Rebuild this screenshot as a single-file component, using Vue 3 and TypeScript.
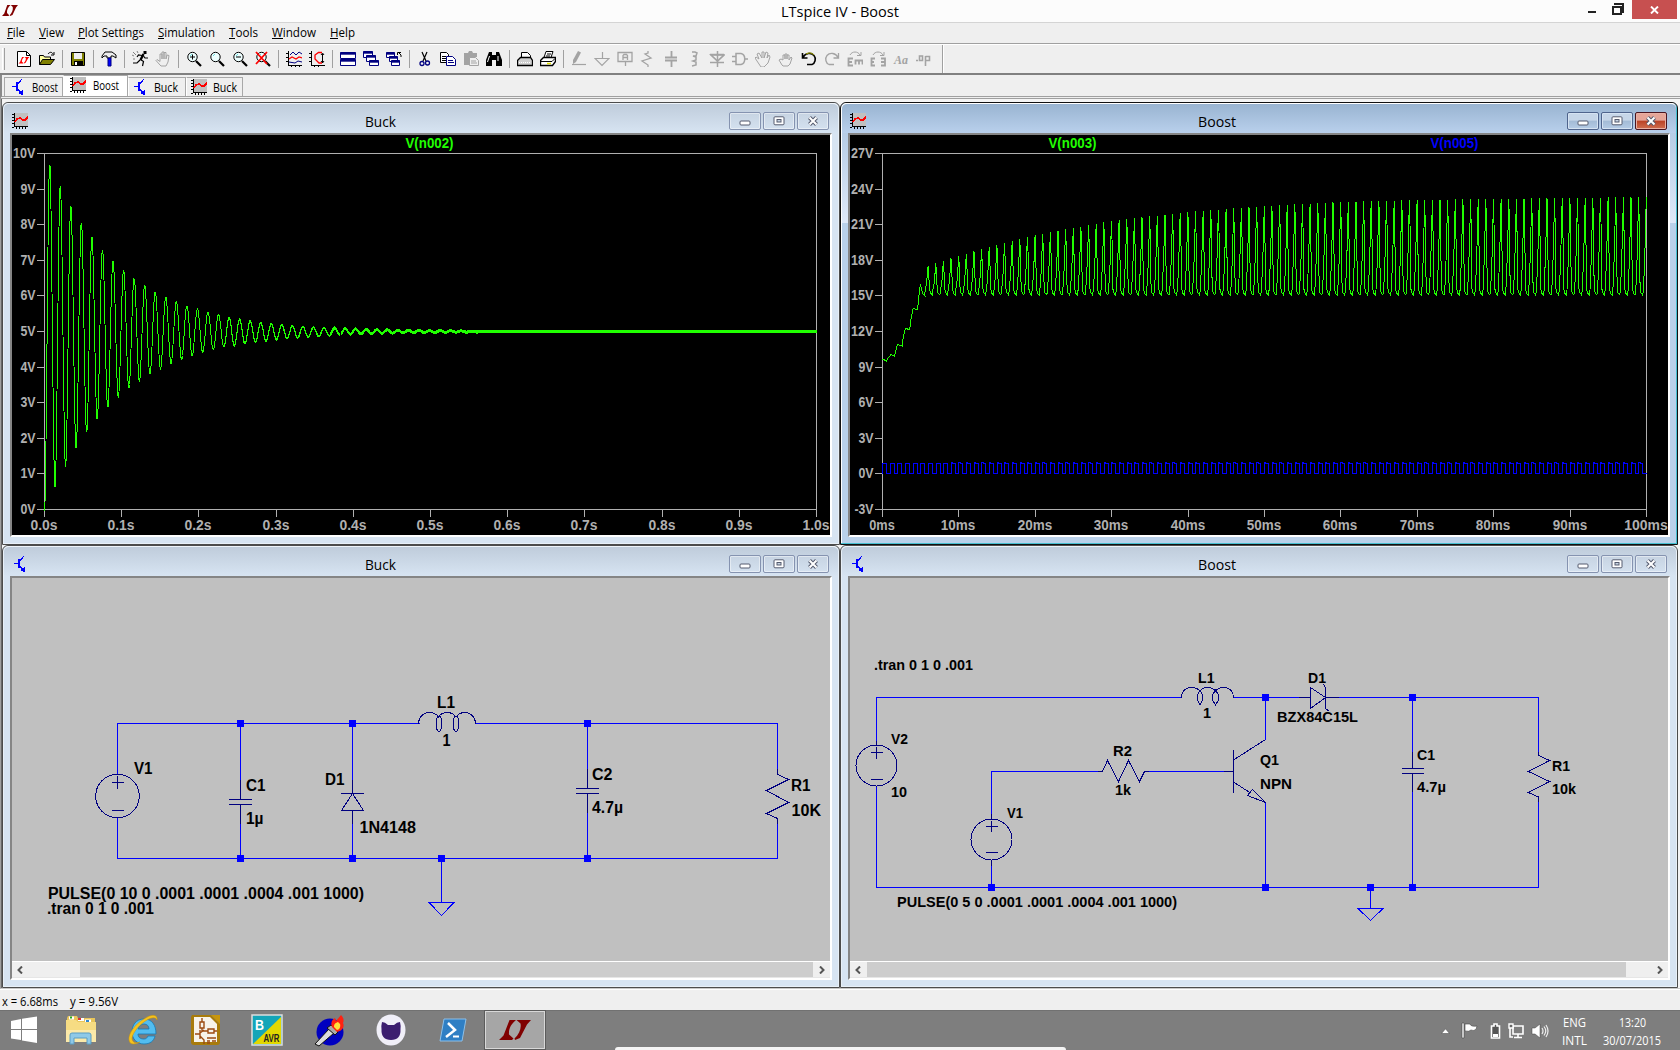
<script setup lang="ts">
import { h, type FunctionalComponent } from 'vue'

interface FitProps { t: string; w: number; s?: number; fill?: string; font?: string; ul?: number }

// One line of text set to an exact width; ul is the width of the mnemonic underline.
const Fit: FunctionalComponent<FitProps> = (p) => {
  const s = p.s ?? 12
  const hgt = Math.round(s * 1.5)
  const base = Math.round(hgt / 2 + s * 0.36)
  const text = h('text', {
    x: 0, y: base, 'font-size': s, textLength: p.w, lengthAdjust: 'spacingAndGlyphs',
    fill: p.fill ?? '#000', 'font-family': p.font ?? "'Open Sans','Noto Sans',sans-serif",
  }, p.t)
  const line = p.ul ? [h('rect', { x: 0, y: base + 1, width: p.ul, height: 1, fill: '#000' })] : []
  return h('svg', { width: p.w + 2, height: hgt, style: { display: 'block', overflow: 'visible', flex: 'none' } }, [text, ...line])
}
Fit.props = ['t', 'w', 's', 'fill', 'font', 'ul']

const menus = [
  { t: 'File', w: 18, cell: 32, ul: 6 }, { t: 'View', w: 25, cell: 39, ul: 7 }, { t: 'Plot Settings', w: 66, cell: 80, ul: 7 },
  { t: 'Simulation', w: 57, cell: 71, ul: 6 }, { t: 'Tools', w: 29, cell: 43, ul: 6 }, { t: 'Window', w: 44, cell: 58, ul: 11 }, { t: 'Help', w: 25, cell: 40, ul: 8 },
]

const plotIcon = '<path d="M2 0h14v14H2z" fill="#c0c0c0"/><path d="M2.5 0v14M2 13.5h14M0 1.5h2M0 4.5h2M0 7.5h2M0 10.5h2M4.5 14v2M7.5 14v2M10.5 14v2M13.5 14v2M0 14.5h2" stroke="#000" fill="none"/><path d="M3 9L5 6L8 5L11 7H13L16 4" stroke="#f00" stroke-width="1.8" fill="none"/>'
const bjtIcon = '<path d="M0 7.5h4M5 6L10 0M5 9L10 15" stroke="#00f" stroke-width="1.1" fill="none"/><path d="M4 3h2v9H4zM7 13l4-2v5l-4-1z" fill="#00f"/>'

const logo = 'M10.500 0H17C12 4 9.500 9 10 14.500L14.500 18.500 13 20H0L4.500 15.500zM17.500 0H32L28 4.500 21 18 16 20 15.500 18.500C20 14 22.500 9 21.500 3.500z'
const lens = '<circle cx="6.5" cy="6" r="4.7" fill="#eff" stroke="#000"/><path d="M4 5l2-2" stroke="#6dd" fill="none"/><path d="M10 10l5 5" stroke="#000" stroke-width="2.2"/>'
const g = (d: string, w = 1.2) => `<path d="${d}" stroke="#a3a3a3" stroke-width="${w}" fill="none"/>`
const win = (x: number, y: number, w: number, hh: number) => `<path d="M${x} ${y}h${w}v${hh}h-${w}z" fill="#fff" stroke="#000080"/><path d="M${x} ${y + 1}h${w}" stroke="#000080" stroke-width="2.4"/>`

const icons: string[] = [
  `<path d="M1.5 .5h9l4 4v11h-13z" fill="#fff" stroke="#000"/><path d="M10.5 .5v4h4" fill="none" stroke="#000"/><path transform="translate(2.5 6) scale(.34 .32)" d="${logo}" fill="#f00"/>`,
  '<path d="M.5 13.500V4.500h4l1 1.500h6v3" fill="#ffffa0" stroke="#000"/><path d="M.5 13.500l3-5h12l-4 5z" fill="#808000" stroke="#000"/><path d="M9 3c2-2.500 4-2 5 0M15 1v3h-3" fill="none" stroke="#000"/>',
  '|',
  '<path d="M1.500 1.500h13v13h-13z" fill="#808000" stroke="#000"/><path d="M4 2h8v6H4z" fill="#efefef"/><path d="M4 10h9v4H4z" fill="#000"/><path d="M5 11h2v3H5z" fill="#fff"/>',
  '|',
  '<path d="M1 5l3-4h7l4 3v3l-3-2h-2v2H6V5H3L1 7z" fill="#eee" stroke="#000"/><path d="M7 7h3v8H7z" fill="#00f" stroke="#000080"/>',
  '|',
  '<path d="M11.500 0h3v3h-3z" fill="#000"/><path d="M11.500 3L8.500 9" stroke="#000" stroke-width="2.400"/><path d="M10 4.500L6.500 4 5 6M11.500 5l1.500 2h3M8.500 8.500l3 2-1 4.500M8 9l-3 3H1" stroke="#000" stroke-width="1.200" fill="none"/><path d="M1 1l3 3M0 4l2 1M5 0l1 2M1 8h2" stroke="#808080" fill="none"/>',
  g('M5 14L1 9.500l1-1 3 2V3h2v5V1h2v7V1.500h2V8l1-4 2 .5L13 11l-2 4H6z', 1),
  '|',
  lens + '<path d="M4 6h5M6.500 3.500v5" stroke="#000"/>',
  lens,
  lens + '<path d="M4 6h5" stroke="#000"/>',
  lens + '<path d="M1 1l11 12M12 1L1 13" stroke="#f00" stroke-width="1.800"/>',
  '|',
  '<path d="M2.500 0v15M2 14.500h14M0 2.500h2M0 6.500h2M0 10.500h2M5.500 14v2M9.500 14v2M13.500 14v2" stroke="#000"/><path d="M4 4l3-3 3 3 3-3 3 2M3 11l6 1 3-2 4 1" stroke="#000080" fill="none"/><path d="M3 8l3-2 4 2 3-2 3 1" stroke="#f00" stroke-width="1.300" fill="none"/>',
  '<path d="M2.500 0v15M2 14.500h14M0 2.500h2M0 6.500h2M0 10.500h2M5.500 14v2M9.500 14v2M13.500 3v9M12 4l1.500-2L15 4M12 10l1.500 2 1.500-2" stroke="#000" fill="none"/><path d="M13 1.500H9.500L6 4v4l4 4h3" stroke="#f00" stroke-width="1.300" fill="none"/>',
  '|',
  win(0.5, 1.5, 15, 6) + win(0.5, 8.500, 15, 6),
  win(0.5, 0.5, 9, 6) + win(3.500, 4.500, 9, 6) + win(6.500, 9.500, 9, 5),
  win(0.5, 1.5, 8, 5) + win(3.500, 5.500, 8, 5) + win(5.500, 9.500, 8, 5) + '<path d="M15 6V4l-3-3M11.500 4V1.500H15" stroke="#000" fill="none"/>',
  '|',
  '<path d="M5 1l4 9M10 1L6 10" stroke="#000" stroke-width="1.200"/><circle cx="5" cy="12.500" r="2" fill="none" stroke="#000080" stroke-width="1.300"/><circle cx="10.500" cy="12" r="2" fill="none" stroke="#000080" stroke-width="1.300"/>',
  '<path d="M.5 1.500h6l2 2v8h-8z" fill="#fff" stroke="#000"/><path d="M2 5.500h4M2 7.500h4M2 9.500h4" stroke="#000"/><path d="M6.500 5.500h6l3 3v6h-9z" fill="#fff" stroke="#000080"/><path d="M8 9.500h5M8 11.500h6" stroke="#000080"/>',
  '<path d="M1 2h4l1-2h3l1 2h4v4h-7v8H1z" fill="#a3a3a3"/><path d="M6.500 6.500h6l3 3v5h-9z" fill="#efefef" stroke="#a3a3a3"/><path d="M8 10h5M8 12h6" stroke="#a3a3a3"/>',
  '<path d="M3 1h3v3h4V1h3l3 8v6h-6V9H6v6H0V9z" fill="#000"/><path d="M3.500 5l-2 6M12 5v5" stroke="#fff"/>',
  '|',
  '<path d="M4.500 6.500V1.500h6l3 3v3" fill="#fff" stroke="#000"/><path d="M.5 9.500l3-3h10l2 3v5h-15z" fill="#d0d0d0" stroke="#000" stroke-width="1.300"/><path d="M2 11.500h11" stroke="#fff" stroke-dasharray="1 1"/>',
  '<path d="M4 6.500L6 .500h7l-2 6" fill="#fff" stroke="#000"/><path d="M7 3h4M6 5h4" stroke="#000"/><path d="M.5 9.500l3-3h12v4l-3 4h-12z" fill="#fff" stroke="#000" stroke-width="1.400"/><path d="M1 10.500h11l3-3" stroke="#000" fill="none"/><path d="M7 12.500h4" stroke="#dd0" stroke-width="1.500"/>',
  '|',
  '<path d="M2 9L7 0l3 1.500L5 11l-3 2z" fill="#a3a3a3"/>' + g('M1 13.500h14'),
  g('M8.500 1v6M1 7.500h14L8 14.500z'),
  g('M1 1.500h14v9H1zM8.500 10v5M6 9V4.500l1-1h2.500l1 1V9M6 6.500h4.500', 1.3),
  g('M8 0v2l-3 1 6 4-9 3 6 4v2', 1.3),
  g('M8.500 0v6M2 6.500h12M2 9.500h12M8.500 10v6', 1.8),
  g('M6 1h3l2 1-1 3H7l3 1v3L7 10l3 1v3l-4 1', 1.5),
  '<path d="M2 4h13L8.500 10z" fill="#efefef" stroke="#a3a3a3" stroke-width="1.700"/>' + g('M8.500 0v16M1 3.500h14M1 11.500h14', 1.5),
  g('M0 5.500h4M0 10.500h4M4 2.500h5c5 1 5 10 0 11H4zM12 8h4', 1.5),
  g('M4 13L0 7l1-1 3 2-2-5 2-1 3 5V1h2v6l2-6 2 1-1 5 2-3 1 2-2 6-4 4H6z', 1),
  g('M4 14L1 9l2-1 2 1V4h2v4V3h2v5V4h2v5l2-3 1 1-2 6-2 2H5z', 1),
  '<path d="M1.500 2v5h5M2 6.500C4 2 10 1 13 4.500c2.500 3 1 8-2 9H6" stroke="#000" stroke-width="1.600" fill="none"/><path d="M5 3.200c3-2 6-1.500 8 1" stroke="#bb0" fill="none"/>',
  g('M14.500 2v5h-5M14 6.500C12 2 6 1 3 4.500.500 7.500 2 12.500 5 13.500h5', 1.3),
  g('M6 7.500H1.500v7H6M1.500 11H5M16 9.500H8.500v4M12 10v3.500M15.500 10v3.500', 1.8) + g('M3 4c2-4 8-4 10 0M14 1v3.500h-4', 1),
  g('M5 7.500H1.500v7H5M1.500 11H4M11 7.500h4v7h-4M15 11h-4', 1.8) + g('M3 4c2-4 8-4 10 0M14 1v3.500h-4', 1),
  '<text x="1" y="12.500" font-family="Liberation Serif,serif" font-style="italic" font-weight="bold" font-size="13" textLength="14" lengthAdjust="spacingAndGlyphs" fill="#a3a3a3">Aa</text>',
  g('M0 9.500h2M3.500 5h3v4.500h-3zM9.500 5v10M9.500 5.500h4v4h-4', 1.6),
]

const tabs = [
  { t: 'Boost', icon: bjtIcon, on: false, cls: 't1' }, { t: 'Boost', icon: plotIcon, on: true, cls: 't2' },
  { t: 'Buck', icon: bjtIcon, on: false, cls: 't3' }, { t: 'Buck', icon: plotIcon, on: false, cls: 't4' },
]

// Buck output: decaying ringing around 5 V.
const buckTrace = (dy: number, from: number): string => {
  const pts: string[] = []
  for (let x = from; x <= 816.6; x += 0.5) {
    const t = x - 44.5
    const ring = x > 486 ? 0 : 180 * Math.exp(-t / 73.4) * Math.cos((2 * Math.PI * t) / 10.55)
    pts.push(`${x.toFixed(1)},${(331.5 + ring + dy).toFixed(1)}`)
  }
  return pts.join(' ')
}
const buckTraces = [buckTrace(0, 44.5), buckTrace(1, 225), buckTrace(-1, 330)]

// Boost output: startup ramp, then one spike each millisecond clamped at 15 V.
const X0 = 882.5
const MS = 7.64
const env: [number, number][] = [[6, 265.7], [8, 261], [10, 255.7], [15, 245], [20, 235], [30, 221], [40, 212], [50, 206], [60, 202], [70, 200], [80, 199], [90, 198], [100, 197]]
const peakY = (n: number): number => {
  const i = Math.max(1, env.findIndex(([a]) => a >= n))
  const [a, ya] = env[i - 1]
  const [b, yb] = env[i]
  return ya + ((yb - ya) * (n - a)) / (b - a)
}
const startup: [number, number][] = [[1239, 778], [1245, 780], [1250, 784], [1253, 775], [1258, 770], [1262, 764], [1267, 766], [1272, 769], [1276, 755], [1281, 733], [1288, 736], [1294, 738], [1298, 706], [1303, 685], [1309, 687], [1315, 690], [1319, 655], [1325, 625], [1331, 628], [1337, 629], [1342, 575], [1345, 552], [1349, 570], [1353, 583], [1357, 586]]
const boostPts: string[] = startup.map(([x, y]) => `${(440 + x / 2.8).toFixed(1)},${(100 + y / 3).toFixed(1)}`)
for (let n = 6; n <= 100; n++) {
  const p = peakY(n)
  const hgt = 294 - p
  const at = (f: number, y: number) => boostPts.push(`${(X0 + (n + f) * MS).toFixed(1)},${y.toFixed(1)}`)
  at(-0.5, 295); at(-0.4, 290); at(-0.24, 294 - hgt * 0.35); at(-0.12, 294 - hgt * 0.7); at(-0.03, p)
  if (n < 100) { at(0.04, p + hgt * 0.25); at(0.16, 289); at(0.28, 293) }
}
const boostTrace = boostPts.join(' ')

let gate = `M${X0} 473.500V464.500`
for (let n = 0; n < 100; n++) {
  const x = X0 + n * MS
  gate += n > 8 ? `H${x.toFixed(1)}V462.500h1.200V463.500H${(x + 4).toFixed(1)}V473.500H${(x + MS).toFixed(1)}` : `H${x.toFixed(1)}V463.500H${(x + 4).toFixed(1)}V473.500H${(x + MS).toFixed(1)}`
}

const buckY = Array.from({ length: 11 }, (_, i) => ({ t: `${10 - i}V`, y: Math.round(153 + i * 35.6) + 0.5 }))
const buckX = Array.from({ length: 11 }, (_, i) => ({ t: `${(i / 10).toFixed(1)}s`, x: Math.round(44 + i * 77.2) + 0.5 }))
const boostY = Array.from({ length: 11 }, (_, i) => ({ t: `${27 - 3 * i}V`, y: Math.round(153 + i * 35.6) + 0.5 }))
const boostX = Array.from({ length: 11 }, (_, i) => ({ t: `${i * 10}ms`, x: Math.round(882 + i * 76.4) + 0.5 }))
const labelW = (t: string) => (t.endsWith('ms') ? t.length * 9 - 1.500 : t.startsWith('-') ? 19 : t.endsWith('s') ? 27 : t.length * 7.300 + 0.500)

interface Lbl { t: string; x: number; y: number; w: number }
const L = (t: string, x: number, y: number, w: number): Lbl => ({ t, x, y, w })
const buckLabels = [
  L('V1', 134, 774, 18.500), L('C1', 246, 791, 19.500), L('1µ', 246, 824, 17.500), L('D1', 325, 785, 19.500), L('1N4148', 359.500, 833, 56.500),
  L('L1', 437, 708, 18), L('1', 442.500, 746, 8), L('C2', 592, 780, 20.500), L('4.7µ', 592, 813, 31), L('R1', 791, 791, 19.500), L('10K', 791.500, 816, 29.500),
  L('PULSE(0 10 0 .0001 .0001 .0004 .001 1000)', 48, 899, 316), L('.tran 0 1 0 .001', 47, 914, 107),
]
const boostLabels = [
  L('.tran 0 1 0 .001', 874, 670, 99), L('L1', 1198, 683, 16.500), L('1', 1203, 718, 8), L('V2', 891, 744, 17), L('10', 891, 797, 16),
  L('R2', 1113, 756, 19), L('1k', 1115, 795, 16), L('V1', 1007, 818, 16), L('Q1', 1260, 765, 19), L('NPN', 1260, 789, 32),
  L('PULSE(0 5 0 .0001 .0001 .0004 .001 1000)', 897, 907, 280), L('BZX84C15L', 1277, 722, 81), L('D1', 1308, 683, 18),
  L('C1', 1417, 760, 18), L('4.7µ', 1417, 792, 29), L('R1', 1552, 771, 18), L('10k', 1552, 794, 24),
]
const buckNodes = [[240, 723], [352, 723], [587, 723], [240, 858], [352, 858], [441, 858], [587, 858]]
const boostNodes = [[1265, 697], [1412, 697], [991, 887], [1265, 887], [1370, 887], [1412, 887]]

const windows = [
  { id: 'bp', title: 'Buck', w: 31, icon: plotIcon, active: false },
  { id: 'sp', title: 'Boost', w: 38, icon: plotIcon, active: true },
  { id: 'bs', title: 'Buck', w: 31, icon: bjtIcon, active: false },
  { id: 'ss', title: 'Boost', w: 38, icon: bjtIcon, active: false },
]
</script>

<template>
  <div class="screen">
    <header class="title">
      <svg class="applogo" width="16" height="11" viewBox="0 0 32 20" preserveAspectRatio="none"><path :d="logo" fill="#800000" /></svg>
      <div class="caption"><Fit t="LTspice IV - Boost" :w="118" :s="14" /></div>
      <div class="sys">
        <i class="min"></i>
        <svg width="12" height="12" viewBox="0 0 12 12" shape-rendering="crispEdges"><path d="M1 4h8v7H1zM1 3.500h8M3 2V1h8v8h-1" fill="none" stroke="#222" stroke-width="1.500" /></svg>
        <b><svg width="9" height="8" viewBox="0 0 9 8"><path d="M1 .5l7 7M8 .5l-7 7" stroke="#fff" stroke-width="1.900" /></svg></b>
      </div>
    </header>
    <nav class="menu">
      <div v-for="m in menus" :key="m.t" :style="{ width: m.cell + 'px' }"><Fit :t="m.t" :w="m.w" :s="12.5" :ul="m.ul" /></div>
    </nav>
    <div class="tools">
      <i class="grip"></i>
      <template v-for="(ic, i) in icons" :key="i">
        <i v-if="ic === '|'" class="sep"></i>
        <span v-else class="tool"><svg width="16" height="16" viewBox="0 0 16 16" v-html="ic"></svg></span>
      </template>
      <i class="toolend"></i>
    </div>
    <div class="tabs">
      <div v-for="(t, i) in tabs" :key="i" class="tab" :class="[t.cls, { on: t.on }]">
        <svg width="16" height="16" viewBox="0 0 16 16" shape-rendering="crispEdges" v-html="t.icon"></svg>
        <Fit class="tabtext" :t="t.t" :w="t.t === 'Boost' ? 26 : 24" :s="12" />
      </div>
    </div>
    <main class="mdi">
      <section v-for="w in windows" :key="w.id" class="win" :class="[w.id, { active: w.active }]">
        <div class="bar">
          <svg class="wicon" width="16" height="16" viewBox="0 0 16 16" shape-rendering="crispEdges" v-html="w.icon"></svg>
          <div class="wtitle"><Fit :t="w.title" :w="w.w" :s="15" /></div>
          <div class="btn"><svg width="12" height="6" viewBox="0 0 12 6"><rect x="1" y="1" width="10" height="4" rx="1" fill="#fff" stroke="#555b6e" /></svg></div>
          <div class="btn"><svg width="12" height="10" viewBox="0 0 12 10"><rect x="1" y=".8" width="10" height="8" rx="1" fill="#fff" stroke="#555b6e" /><rect x="4" y="3.500" width="4" height="2.500" fill="#c5d3e2" stroke="#555b6e" /></svg></div>
          <div class="btn x"><svg width="12" height="10" viewBox="0 0 12 10"><path d="M2.500 1.500l7 7M9.500 1.500l-7 7" stroke="#555b6e" stroke-width="4" /><path d="M2.500 1.500l7 7M9.500 1.500l-7 7" stroke="#fff" stroke-width="2" /></svg></div>
        </div>
        <div class="client">
          <svg v-if="w.id === 'bp'" class="plot" width="818" height="400" viewBox="12 135 818 400">
            <g stroke="#b0b0b0" fill="none" shape-rendering="crispEdges">
              <path d="M44.500 153.500H816.500V509.500H44.500z" />
              <path v-for="a in buckY" :key="a.t" :d="`M37 ${a.y}H44`" />
              <path v-for="a in buckX" :key="a.t" :d="`M${a.x} 509V517`" />
            </g>
            <g fill="#b0b0b0">
              <text v-for="a in buckY" :key="a.t" x="35.500" :y="a.y + 4.500" text-anchor="end" :textLength="labelW(a.t)" lengthAdjust="spacingAndGlyphs">{{ a.t }}</text>
              <text v-for="a in buckX" :key="a.t" :x="a.x - .5" y="530" text-anchor="middle" :textLength="labelW(a.t)" lengthAdjust="spacingAndGlyphs">{{ a.t }}</text>
            </g>
            <text x="405.500" y="148" fill="#20ff00" textLength="48" lengthAdjust="spacingAndGlyphs">V(n002)</text>
            <polyline v-for="(t, i) in buckTraces" :key="i" :points="t" fill="none" stroke="#20ff00" shape-rendering="crispEdges" />
          </svg>
          <svg v-else-if="w.id === 'sp'" class="plot" width="818" height="400" viewBox="850 135 818 400">
            <g stroke="#b0b0b0" fill="none" shape-rendering="crispEdges">
              <path d="M882.500 153.500H1646.500V509.500H882.500z" />
              <path v-for="a in boostY" :key="a.t" :d="`M875 ${a.y}H882`" />
              <path v-for="a in boostX" :key="a.t" :d="`M${a.x} 509V517`" />
            </g>
            <g fill="#b0b0b0">
              <text v-for="a in boostY" :key="a.t" x="873.500" :y="a.y + 4.500" text-anchor="end" :textLength="labelW(a.t)" lengthAdjust="spacingAndGlyphs">{{ a.t }}</text>
              <text v-for="a in boostX" :key="a.t" :x="a.x - .5" y="530" text-anchor="middle" :textLength="labelW(a.t)" lengthAdjust="spacingAndGlyphs">{{ a.t }}</text>
            </g>
            <text x="1048.500" y="148" fill="#20ff00" textLength="48" lengthAdjust="spacingAndGlyphs">V(n003)</text>
            <text x="1430.500" y="148" fill="#00f" textLength="48" lengthAdjust="spacingAndGlyphs">V(n005)</text>
            <polyline :points="boostTrace" fill="none" stroke="#20ff00" shape-rendering="crispEdges" />
            <path :d="gate" fill="none" stroke="#00f" shape-rendering="crispEdges" />
          </svg>
          <template v-else>
            <svg v-if="w.id === 'bs'" class="sch" width="818" height="383" viewBox="12 578 818 383">
              <g fill="none" shape-rendering="crispEdges" stroke="#00f">
                <path d="M117.500 774V723.500H419.500M475.500 723.500H777.500V770M777.500 824V858.500H117.500V818M240.500 723V780M240.500 823V858M352.500 723V780M352.500 823V858M587.500 723V769M587.500 813V858M441.500 858V902.500M429 902.500H454L441.500 915.500z" />
                <g stroke="#000080">
                  <circle cx="117.500" cy="796" r="21.800" />
                  <path d="M111.500 782.500h12M117.500 776v13M111.500 810.500h12" />
                  <path d="M240.500 780V799.500M229 799.500h23M229 804.500h23M240.500 804.500V824" />
                  <path d="M352.500 780V793.500M341 793.500h23M352.500 793.500L363.500 810.500H341.500zM352.500 810.500V824" />
                  <path d="M587.500 769V788.500M576 788.500h23M576 793.500h23M587.500 793.500V813" />
                  <path d="M777.500 769V774.500L788.500 779.500L766.500 790.500L788.500 802.500L766.500 813.500L777.500 818.500V824" />
                  <path d="M418.500 723.500c0-6 4.500-11 10.500-11c4 0 7.500 1.500 9.500 4.500c2-3 4.500-4.500 8.500-4.500s7 1.500 9 4.500c2-3 5-4.500 9-4.500c6 0 10.500 5 10.500 11" />
                  <ellipse cx="439" cy="723.800" rx="2.700" ry="7.700" /><ellipse cx="456" cy="723.800" rx="2.700" ry="7.700" />
                </g>
              </g>
              <rect v-for="(n, i) in buckNodes" :key="i" :x="n[0] - 3" :y="n[1] - 3" width="7" height="7" fill="#00f" />
              <text v-for="(l, i) in buckLabels" :key="i" class="lb" :x="l.x" :y="l.y" :textLength="l.w" lengthAdjust="spacingAndGlyphs">{{ l.t }}</text>
            </svg>
            <svg v-else class="sch" width="818" height="383" viewBox="850 578 818 383">
              <g fill="none" shape-rendering="crispEdges" stroke="#00f">
                <path d="M876.500 745V697.500H1181.500M1233.500 697.500H1299M1339 697.500H1538.500V752M1538.500 802V887.500H876.500V786M991.500 819V771.500H1098M991.500 860V887M1149 771.500H1224M1265.500 697V739.500M1265.500 802.500V887M1412.500 697V752M1412.500 792V887M1370.500 887V908.500M1358 908.500H1383L1370.500 920.500z" />
                <g stroke="#000080">
                  <circle cx="876.500" cy="765.500" r="20.500" /><circle cx="991.500" cy="839.500" r="20.500" />
                  <path d="M870.500 752.500h12M876.500 747v12M870.500 779.500h12M876.500 741v4M985.500 826.500h12M991.500 821v11M985.500 852.500h12M991.500 814v5M991.500 860v6" />
                  <path d="M1098 771.500H1102.500L1107.500 760.500L1118.500 781.500L1128.500 760.500L1139.500 781.500L1144.500 771.500H1149" />
                  <path d="M1224 771.500H1233.500M1233.500 750V793M1233.500 760L1265.500 739.500M1233.500 782L1249.800 792.500M1252.500 789.500L1247.500 795.500L1265.500 802.500z" />
                  <path d="M1299 697.500H1310.500M1310.500 687.500L1325.500 697.500L1310.500 708.500zM1323.500 684.500L1325.500 687.500V708.500L1329.500 711.500M1325.500 697.500H1339" />
                  <path d="M1412.500 752V768.500M1402 768.500h22M1402 773.500h22M1412.500 773.500V792" />
                  <path d="M1538.500 752V755.500L1549.500 760.500L1528.500 771.500L1549.500 781.500L1528.500 792.500L1538.500 797V802" />
                  <path d="M1181.500 697.500c0-6 4-10 9.500-10c4 0 7 1 9 3.500c2-2.500 4-3.500 7.500-3.500s6 1 8 3.500c2-2.500 4.500-3.500 8.500-3.500c5.500 0 9.500 4 9.500 10" />
                  <path d="M1200 690l-2.500 5v5l2.500 5 2.500-5v-5zM1215.500 690l-3 5v5l3 5 3-5v-5z" />
                </g>
              </g>
              <rect v-for="(n, i) in boostNodes" :key="i" :x="n[0] - 3" :y="n[1] - 3" width="7" height="7" fill="#00f" />
              <text v-for="(l, i) in boostLabels" :key="i" class="lb sm" :x="l.x" :y="l.y" :textLength="l.w" lengthAdjust="spacingAndGlyphs">{{ l.t }}</text>
            </svg>
            <div class="scroll" :class="w.id">
              <span><svg width="6" height="8" viewBox="0 0 6 8"><path d="M5 .5L1.500 4L5 7.500" fill="none" stroke="#555" stroke-width="2" /></svg></span>
              <i></i>
              <span><svg width="6" height="8" viewBox="0 0 6 8"><path d="M1 .5L4.500 4L1 7.500" fill="none" stroke="#555" stroke-width="2" /></svg></span>
            </div>
          </template>
        </div>
      </section>
    </main>
    <div class="status"><Fit t="x = 6.68ms" :w="56" :s="12" /><Fit t="y = 9.56V" :w="48" :s="12" /></div>
    <footer class="taskbar">
      <div class="cell start">
        <svg width="28" height="28" viewBox="0 0 28 28"><path d="M1 5l10-2v10H1zM12 2.800L27 .5V13H12zM1 14h10v10L1 22.500zM12 14h15v13l-15-2.500z" fill="#fff" /></svg>
      </div>
      <div class="cell">
        <svg width="33" height="30" viewBox="0 0 33 30"><path d="M2 3l1-2h9l1 2h17v5H2z" fill="#e8c55a" /><path d="M4 3h5M13 4.500h6M20 6h6" stroke="#fff" stroke-width="3" /><path d="M5 2.500h2" stroke="#2a2" stroke-width="2" /><path d="M13 4h3" stroke="#d33" stroke-width="2" /><path d="M21 6h3" stroke="#38c" stroke-width="2" /><path d="M1 5h10l2 2h18v20H1z" fill="#f6dc83" /><path d="M1 15h30v12H1z" fill="#fbe9a9" /><path d="M5 29V20q0-2 2-2h17q2 0 2 2v9h-4v-6H9v6z" fill="#8fc9e8" stroke="#5b9dc4" /></svg>
      </div>
      <div class="cell">
        <svg width="32" height="32" viewBox="0 0 32 32"><path d="M17 5C9 5 5 11 5 18s5 12 12 12c6 0 10-3 11-8h-7c-1 2-2 3-4 3-4 0-6-2-6-5h18C29 11 25 5 17 5zM11 15c1-3 3-5 6-5s5 2 5 5z" fill="#52bdf0" stroke="#1778b4" stroke-width=".8" /><path d="M30 6c1-6-6-6-13-1C8 10 1 20 2 26c1 6 7 4 11 2C8 30 5 28 5 24c1-6 8-14 15-18 5-3 9-3 10 0z" fill="#f6c21c" stroke="#c99508" stroke-width=".5" /></svg>
      </div>
      <div class="cell">
        <svg width="31" height="32" viewBox="0 0 31 32"><path d="M2 1h19l9 9v18q0 3-3 3H4q-3 0-3-3V3z" fill="#a87b0b" /><path d="M4 3h16l7 7v18H4z" fill="#f7f3ea" /><path d="M21 1h9v9z" fill="#c8960c" /><path d="M12 4v4M10 8h4v6h-4zM12 14v3M12 17h6M18 15h6v4h-6zM24 17h3M5 20h5M10 16v9M10 19l4-3M10 22l4 4v4M17 24h9M17 27h3M22 27h4M17 29h3" fill="none" stroke="#9c4a10" stroke-width="1.400" /></svg>
      </div>
      <div class="cell">
        <svg width="32" height="32" viewBox="0 0 32 32"><path d="M1 1h30v30H1z" fill="#14a5b8" stroke="#ddd" stroke-width="1.500" /><path d="M30 3v27H2z" fill="#e2d800" /><text x="4" y="15.500" font-family="Liberation Sans,sans-serif" font-weight="bold" font-size="14" fill="#fff" textLength="9" lengthAdjust="spacingAndGlyphs">B</text><text x="12.500" y="28" font-family="Liberation Sans,sans-serif" font-weight="bold" font-size="10.500" fill="#222" textLength="16" lengthAdjust="spacingAndGlyphs">AVR</text></svg>
      </div>
      <div class="cell">
        <svg width="32" height="34" viewBox="0 0 32 34"><circle cx="17" cy="19" r="13.500" fill="#0000c0" /><path d="M2 31L16 16l5 4L6 33z" fill="#ddd" stroke="#111" /><path d="M14 15l8 7 3-3-7-7z" fill="#aaa" stroke="#111" /><path d="M19 14c-2-5 1-8 3-9l1 3 5-6c3 3 3 6 2 8 2 4-1 8-6 9z" fill="#f21" /><path d="M21 14c0-4 2-4 4-5l2 2c1 3-1 6-3 6z" fill="#ffe23a" /></svg>
      </div>
      <div class="cell">
        <svg width="30" height="32" viewBox="0 0 30 32"><ellipse cx="15" cy="16" rx="14.500" ry="15.500" fill="#f0eff8" /><path d="M6 8q3 0 6 3h6Q21 8 24 8q1 4 .500 7Q25 26 15 26 5 26 5.500 15 5 12 6 8z" fill="#3c1e70" /></svg>
      </div>
      <div class="cell">
        <svg width="28" height="24" viewBox="0 0 28 24"><path d="M5 1h22l-4 22H1z" fill="#2f7fc4" stroke="#8cc0ea" /><path d="M9 5l7 7-9 7" fill="none" stroke="#fff" stroke-width="2.500" /><path d="M14 18.500h6" stroke="#fff" stroke-width="2" /></svg>
      </div>
      <div class="cell current">
        <svg width="32" height="20" viewBox="0 0 32 20"><path :d="logo" fill="#800000" /></svg>
      </div>
      <div class="tray">
        <svg class="up" width="9" height="6" viewBox="0 0 9 6"><path d="M.5 5.500L4.500 .8L8.500 5.500z" fill="#fff" stroke="#555" stroke-width=".6" /></svg>
        <svg class="flag" width="17" height="17" viewBox="0 0 17 17"><path d="M1 1h2v15H1zM4 2h5q1 3 7 2-1 6-6 4-2 2-6 1z" fill="#fff" stroke="#444" stroke-width=".6" /></svg>
        <svg class="bat" width="11" height="16" viewBox="0 0 11 16"><path d="M1.500 3H4V1h3v2h2.500v12h-8z" fill="#555" stroke="#fff" stroke-width="1.600" /><path d="M3 11h5v3H3z" fill="#fff" /></svg>
        <svg class="net" width="17" height="16" viewBox="0 0 17 16"><path d="M5 3h10v8H5zM10 11v3M6 14.500h8M2 5v9h3" fill="none" stroke="#fff" stroke-width="1.600" /><path d="M1 1h4v4H1z" fill="#666" stroke="#fff" stroke-width="1.400" /></svg>
        <svg class="vol" width="18" height="16" viewBox="0 0 18 16"><path d="M1 5h3l5-4v14l-5-4H1z" fill="#fff" stroke="#444" stroke-width=".5" /><path d="M11 5q2 3 0 6M13 3.500q3.500 4.500 0 9M15 2q4 6 0 12" fill="none" stroke="#eee" stroke-width="1.200" /></svg>
        <div class="two lang"><Fit t="ENG" :w="23" :s="12.5" fill="#fff" /><Fit t="INTL" :w="25" :s="12.5" fill="#fff" /></div>
        <div class="two clock"><Fit t="13:20" :w="27" :s="12.5" fill="#fff" /><Fit t="30/07/2015" :w="58" :s="12.5" fill="#fff" /></div>
      </div>
      <i class="sliver"></i>
    </footer>
  </div>
</template>

<style>
html, body { margin: 0; background: #efefef; overflow: hidden; }
</style>
<style scoped>
* { box-sizing: border-box; }
svg { display: block; flex: none; }
.screen { width: 1680px; height: 1050px; display: flex; flex-direction: column; background: #efefef; overflow: hidden; font-family: 'Open Sans', sans-serif; }
.title { height: 23px; flex: none; display: flex; background: #fcfcfc; border-bottom: 1px solid #d4d4d4; }
.applogo { margin: 5px 0 0 2px; }
.caption { flex: 1; display: flex; justify-content: center; padding: 1px 0 0 75px; }
.sys { display: flex; width: 92px; }
.sys .min { width: 8px; height: 2px; background: #222; margin: 11px 16px 0 0; }
.sys > svg { margin: 3px 8px 0 0; }
.sys b { width: 45px; height: 19px; background: #c75050; display: flex; align-items: center; justify-content: center; }
.menu { height: 21px; flex: none; display: flex; padding: 0 0 1px 7px; align-items: center; border-bottom: 1px solid #a0a0a0; }
.tools { height: 31px; flex: none; display: flex; align-items: center; padding-bottom: 1px; border-top: 1px solid #fff; border-bottom: 2px solid #808080; }
.grip { width: 3px; height: 22px; margin: 0 7px 0 2px; border-right: 1px solid #a0a0a0; border-left: 1px solid #fff; }
.tool { width: 23px; display: flex; justify-content: center; flex: none; }
.sep { width: 8px; height: 18px; flex: none; background: linear-gradient(#a0a0a0, #a0a0a0) 4px 0 / 1px 18px no-repeat; }
.toolend { width: 2px; height: 28px; margin-left: 7px; border-left: 1px solid #a0a0a0; border-right: 1px solid #fff; }
.tabs { height: 24px; flex: none; display: flex; align-items: flex-end; padding-left: 2px; border-bottom: 3px double #a0a0a0; border-left: 2px solid #8a8a8a; }
.tab { height: 19px; display: flex; align-items: center; border: 1px solid #a8a8a8; border-bottom: 0; border-left-color: #fff; padding-left: 6px; flex: none; }
.tab.on { height: 21px; background: #fff; padding-bottom: 2px; }
.tabtext { margin-top: 2px; }
.t1 { width: 59px; gap: 5px; padding-left: 7px; gap: 4px; border-left-color: #a8a8a8; }
.t2 { width: 65px; gap: 7px; }
.t3 { width: 58px; gap: 5px; padding-left: 5px; gap: 4px; }
.t4 { width: 57px; padding-left: 4px; gap: 6px; }
.mdi { height: 890px; flex: none; margin: 0; padding: 3px 2px 1px 1px; border-left: 1px solid #a0a0a0; display: grid; grid-template: 443px 443px / 838px 838px; background: #f4f4f4; border-bottom: 1px solid #c8c8c8; box-shadow: inset 1px 0 #696969; }
.win { border: 1px solid #4c4c4c; border-radius: 6px 6px 0 0; padding: 0 7px 7px; background: #d7e4f2; box-shadow: inset 0 0 0 1px #e8f0f8; display: flex; flex-direction: column; }
.win.active { background: linear-gradient(#a8c3e0, #dfe9f8 120px, #b9d1ea 120px); border-color: #111; box-shadow: inset -1px -1px #45bfd0, inset 1px 1px #fff; }
.bar { height: 30px; flex: none; display: flex; align-items: flex-start; gap: 2px; margin: 0 -6px; padding: 9px 9px 0 8px; border-radius: 5px 5px 0 0; border-top: 1px solid #eef4fa; background: linear-gradient(#bfccdb, #d7e4f2); }
.active .bar { background: linear-gradient(#99b4d1, #b9d0ec); border-top-color: #fff; }
.bs .wicon, .ss .wicon { margin: 0 -2px 0 2px; }
.wtitle { flex: 1; display: flex; justify-content: center; margin-top: -3px; padding-left: 3px; }
.bp .wtitle, .bs .wtitle { padding-left: 5px; }
.btn { width: 32px; height: 18px; margin-top: -1px; border: 1px solid #8593b0; border-radius: 2px; display: flex; align-items: center; justify-content: center; box-shadow: inset 0 0 0 1px rgba(255, 255, 255, .45); flex: none; }
.btn:nth-child(3) { padding-top: 4px; }
.active .btn { border-color: #4f648c; background: linear-gradient(#c6d6e8 45%, #a3bbd6 50%, #b5cce6); box-shadow: inset 0 0 0 1px #d5e3f2; }
.active .btn.x { border-color: #4a1520; background: linear-gradient(#e5a598 45%, #bb4226 50%, #cf6e50); box-shadow: inset 0 0 0 1px #e8b0a4; }
.client { flex: 1; border: 2px solid; border-color: #858585 #fff #fff #858585; background: #c0c0c0; display: flex; flex-direction: column; }
.plot { background: #000; font: bold 14px 'Liberation Sans', sans-serif; }
.sch { background: #c0c0c0; }
.lb { font: bold 16px 'Liberation Sans', sans-serif; fill: #000; }
.lb.sm { font-size: 15px; }
.scroll { height: 17px; background: #efefef; border-top: 1px solid #fff; border-bottom: 1px solid #e6e6e6; display: flex; justify-content: space-between; }
.scroll span { width: 17px; display: flex; align-items: center; justify-content: center; padding-right: 1px; }
.scroll i { background: #cdcdcd; width: 733px; margin-left: 51px; }
.scroll span + i + span { padding: 0; }
.scroll.ss i { width: 759px; margin-left: 0; margin-right: 25px; }
.status { height: 21px; flex: none; display: flex; gap: 10px; padding: 3px 0 0 2px; border-top: 1px solid #fff; align-items: center; }
.taskbar { flex: 1; background: #7e7e7e; border-top: 1px solid #717171; display: flex; position: relative; }
.cell { width: 62px; display: flex; align-items: center; justify-content: center; flex: none; padding-bottom: 2px; }
.cell.start { width: 50px; padding-bottom: 1px; padding-right: 2px; }
.cell.current { width: 60px; height: 38px; margin-left: 1px; padding: 0; background: #a6a6a6; border: 1px solid #d8d8d8; box-shadow: 0 0 0 1px #5c5c5c; }
.tray { margin-left: auto; display: flex; align-items: center; padding-right: 17px; }
.flag { margin-left: 11px; }
.bat { margin-left: 12px; }
.net { margin-left: 7px; }
.vol { margin-left: 6px; }
.two { display: flex; flex-direction: column; align-items: center; }
.two > svg { height: 18px; }
.lang { margin-left: 13px; }
.clock { margin-left: 14px; }
.sliver { position: absolute; left: 615px; bottom: 0; width: 451px; height: 3px; background: #f4f4f4; border-radius: 3px 3px 0 0; }
</style>
